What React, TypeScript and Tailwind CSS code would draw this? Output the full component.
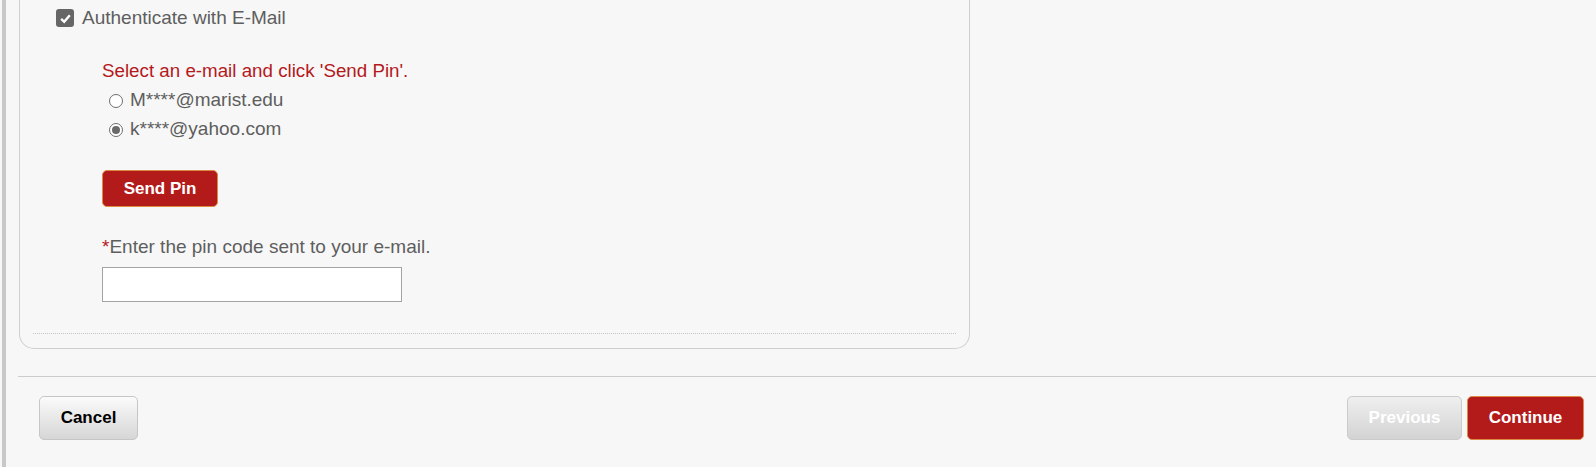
import { useState } from "react";

const emails = ["M****@marist.edu", "k****@yahoo.com"];

function Radio({ checked }: { checked: boolean }) {
  return (
    <span className="flex h-[14px] w-[14px] items-center justify-center rounded-full border border-[#6f6f6f] bg-white">
      {checked && <span className="h-[8px] w-[8px] rounded-full bg-[#6a6a6a]" />}
    </span>
  );
}

export default function App() {
  const [selected, setSelected] = useState(1);
  const [pin, setPin] = useState("");

  return (
    <div
      className="flex h-[467px] w-full overflow-hidden bg-[#f7f7f7] text-[#5e5e5e]"
      style={{ fontFamily: '"Liberation Sans", Arial, sans-serif' }}
    >
      <div className="ml-[2px] w-[4px] shrink-0 bg-[#c8c8c8]" />
      <div className="flex flex-1 flex-col">
        <div className="ml-[13px] w-[951px] rounded-b-[15px] border border-t-0 border-[#cfcfcf]">
          <label className="flex h-[36px] items-center gap-[8px] pl-[36px] text-[19px]">
            <span className="flex h-[18px] w-[18px] items-center justify-center rounded-[3px] bg-[#666666]">
              <svg viewBox="0 0 12 12" className="h-[13px] w-[13px]">
                <path d="M2 6.3 L4.8 9 L10 3" fill="none" stroke="white" strokeWidth="2.2" />
              </svg>
            </span>
            Authenticate with E-Mail
          </label>

          <div className="mt-[24px] pl-[82px]">
            <p className="h-[22px] text-[18.75px] leading-[22px] text-[#b5191c]">
              Select an e-mail and click 'Send Pin'.
            </p>
            <div className="mt-[4px]">
              {emails.map((email, i) => (
                <div
                  key={email}
                  onClick={() => setSelected(i)}
                  className="flex h-[29px] cursor-pointer items-center gap-[7px] pl-[7px] text-[19px]"
                >
                  <Radio checked={selected === i} />
                  <span>{email}</span>
                </div>
              ))}
            </div>

            <button className="mt-[26px] h-[37px] w-[116px] rounded-[5px] border border-[#dd8a45] bg-[#b31b1b] text-[17px] font-bold text-white">
              Send Pin
            </button>

            <p className="mt-[29px] h-[22px] text-[19px] leading-[22px]">
              <span className="text-[#b5191c]">*</span>Enter the pin code sent to your e-mail.
            </p>
            <input
              value={pin}
              onChange={(e) => setPin(e.target.value)}
              className="mt-[9px] block h-[35px] w-[300px] border border-[#a3a3a3] bg-white px-2 text-[16px] outline-none"
            />
          </div>

          <div className="mx-[13px] mb-[14px] mt-[31px] border-t border-dotted border-[#c4c4c4]" />
        </div>

        <div className="ml-[12px] mt-[27px] border-t border-[#cccccc]" />

        <div className="mt-[19px] flex items-center justify-between pl-[33px] pr-[12px]">
          <button className="h-[44px] w-[99px] rounded-[5px] border border-[#c6c6c6] bg-gradient-to-b from-[#fbfbfb] to-[#d6d6d6] text-[17px] font-bold text-black">
            Cancel
          </button>
          <div className="flex gap-[5px]">
            <button
              disabled
              className="h-[44px] w-[115px] rounded-[5px] border border-[#cbcbcb] bg-gradient-to-b from-[#efefef] to-[#d3d3d3] text-[17px] font-bold text-white"
            >
              Previous
            </button>
            <button className="h-[44px] w-[117px] rounded-[5px] border border-[#dd8a45] bg-[#b31b1b] text-[17px] font-bold text-white">
              Continue
            </button>
          </div>
        </div>
      </div>
    </div>
  );
}
